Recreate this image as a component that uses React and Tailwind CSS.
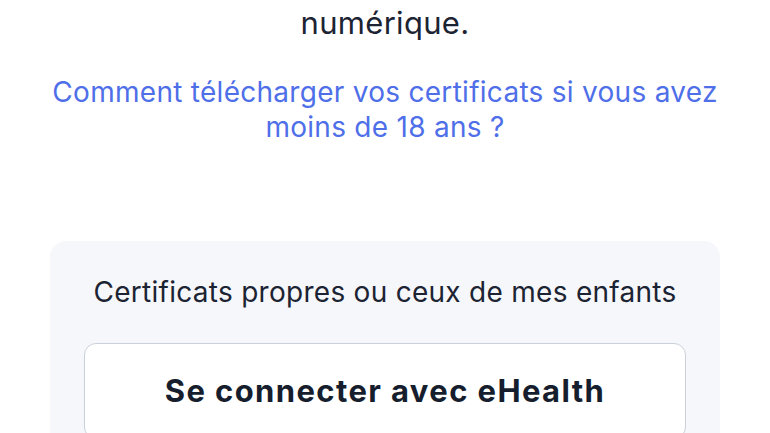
export default function App() {
  return (
    <div
      className="min-h-screen bg-white overflow-hidden"
      style={{ fontFamily: "Inter, 'Noto Sans', sans-serif" }}
    >
      <div className="px-[50px] text-center">
        <p className="text-[31px] leading-[35px] tracking-[0.01em] text-[#1c2333] pt-[5px]">numérique.</p>
        <a className="mt-[35px] block text-[28px] leading-[35px] tracking-[0.01em] text-[#4f6fe9]">
          Comment télécharger vos certificats si vous avez moins de 18 ans ?
        </a>
        <div className="mt-[96px] rounded-[16px] bg-[#f5f7fa] px-[34px] pt-[34px] pb-8">
          <p className="text-[28px] leading-[35px] tracking-[0.01em] text-[#1c2333]">
            Certificats propres ou ceux de mes enfants
          </p>
          <button className="mt-[33px] w-full h-[96px] rounded-[12px] border border-[#c9d1db] bg-white text-[31px] font-bold tracking-[0.045em] text-[#161e2e]">
            Se connecter avec eHealth
          </button>
        </div>
      </div>
    </div>
  );
}
